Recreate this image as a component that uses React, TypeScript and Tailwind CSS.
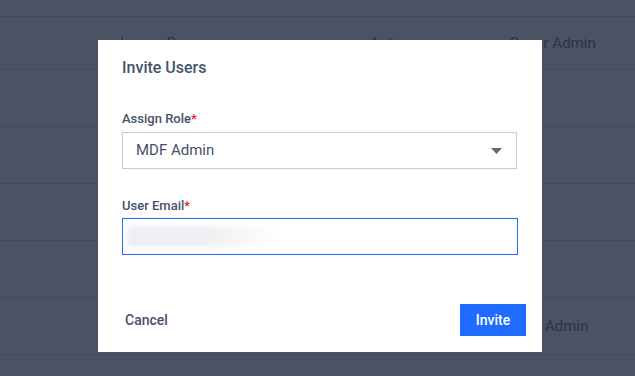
const rows = [
  { h: "h-[17px]", role: "" },
  { h: "h-[53px]", role: "Super Admin" },
  { h: "h-[57px]", role: "" },
  { h: "h-[57px]", role: "" },
  { h: "h-[57px]", role: "" },
  { h: "h-[57px]", role: "" },
  { h: "h-[57px]", role: "MDF Admin" },
];

export default function App() {
  return (
    <div className="relative w-[635px] h-[376px] overflow-hidden bg-[#4a5263] font-['Roboto',sans-serif]">
      {/* table behind the overlay */}
      <div className="flex flex-col">
        {rows.map((row, i) => (
          <div
            key={i}
            className={`${row.h} flex items-center border-b border-[#434a5a] text-[15px] text-[#2d3444]`}
          >
            <span className="w-[120px] shrink-0" />
            <span className="w-[250px] shrink-0">{row.role ? "Lorem Person" : ""}</span>
            <span className="w-[140px] shrink-0">{row.role ? "Active" : ""}</span>
            <span>{row.role}</span>
          </div>
        ))}
      </div>

      {/* modal */}
      <div className="absolute left-[98px] top-[40px] w-[444px] h-[312px] bg-white flex flex-col px-6 pt-4 pb-4">
        <h2 className="text-[16px] leading-6 font-medium text-[#47516b]">Invite Users</h2>

        <label className="mt-[29px] text-[13px] leading-5 font-medium text-[#47516b]">
          Assign Role<span className="text-[#e0262b]">*</span>
        </label>
        <div className="mt-[3px] h-[37px] w-[395px] border border-[#c9cbcf] flex items-center justify-between pl-[13px] pr-[14px]">
          <span className="text-[15px] text-[#47516b]">MDF Admin</span>
          <svg width="11" height="6" viewBox="0 0 11 6" className="mt-px">
            <path d="M0 0h11L5.5 6z" fill="#666a70" />
          </svg>
        </div>

        <label className="mt-[27px] text-[13px] leading-5 font-medium text-[#47516b]">
          User Email<span className="text-[#e0262b]">*</span>
        </label>
        <div className="mt-[2px] h-[37px] w-[396px] border border-[#1f6bff] flex items-center px-[4px]">
          <div className="h-[21px] w-[154px] bg-gradient-to-r from-[#eeeff2] via-[#eeeff2] to-white blur-[2px]" />
        </div>

        <div className="mt-auto flex items-center justify-between">
          <button className="ml-[3px] text-[14px] font-medium text-[#47516b]">Cancel</button>
          <button className="mr-[-8px] h-[32px] w-[66px] bg-[#1f6bff] text-white text-[14px] font-medium">
            Invite
          </button>
        </div>
      </div>
    </div>
  );
}
